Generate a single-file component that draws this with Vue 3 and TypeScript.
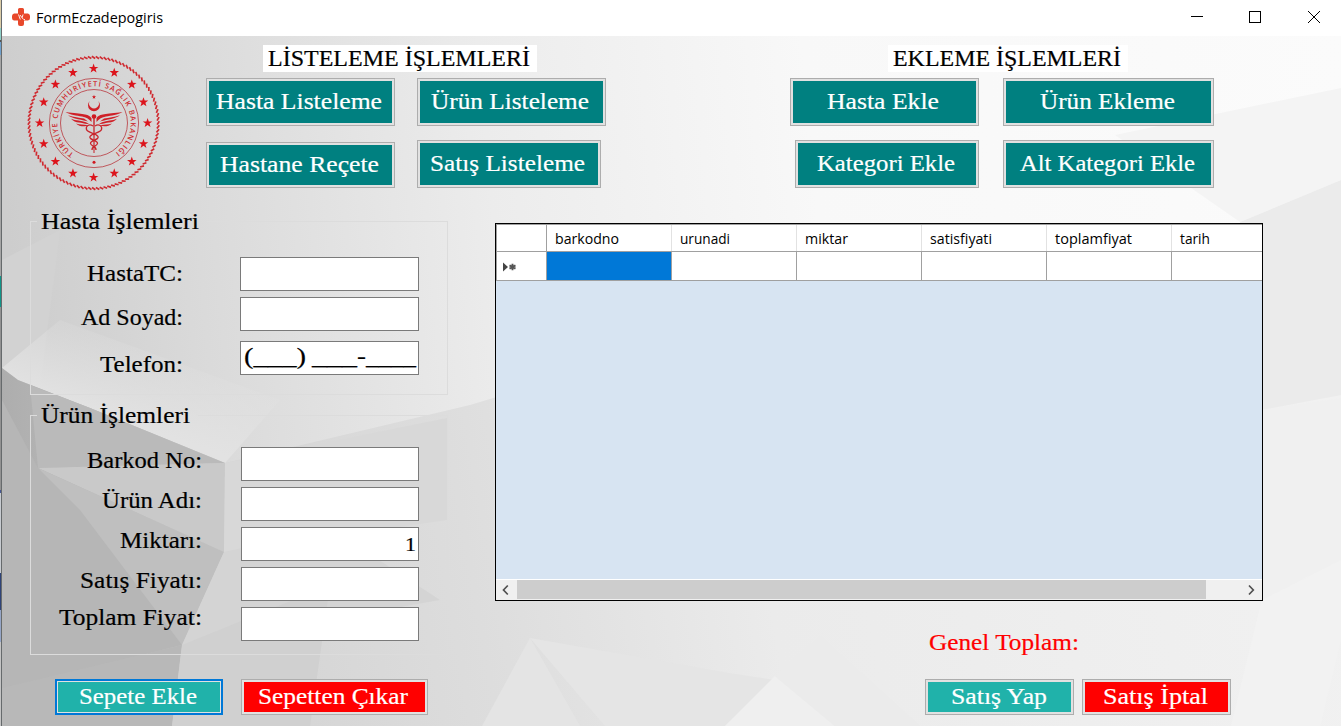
<script setup lang="ts">
import { h, type FunctionalComponent } from 'vue'

interface FitProps { text: string; w: number; kind?: string }

// One line of text set to an exact advance width.
const FitText: FunctionalComponent<FitProps> = (props) =>
  h('svg', { class: ['fit', props.kind ?? 'serif'], width: props.w, height: 30 }, [
    h('text', { x: 0, y: 22, textLength: props.w, lengthAdjust: 'spacingAndGlyphs' }, props.text),
  ])
FitText.props = ['text', 'w', 'kind']

interface Item { text: string; w: number; cls?: string }

const listButtons: Item[] = [
  { text: 'Hasta Listeleme', w: 166, cls: 'w189' },
  { text: 'Ürün Listeleme', w: 158, cls: 'w189' },
  { text: 'Hastane Reçete', w: 159, cls: 'w189 low' },
  { text: 'Satış Listeleme', w: 155, cls: 'w184' },
]
const addButtons: Item[] = [
  { text: 'Hasta Ekle', w: 112, cls: 'w189' },
  { text: 'Ürün Ekleme', w: 135, cls: 'w211' },
  { text: 'Kategori Ekle', w: 138, cls: 'w184' },
  { text: 'Alt Kategori Ekle', w: 175, cls: 'w211' },
]
const patientLabels: Item[] = [
  { text: 'HastaTC:', w: 96 },
  { text: 'Ad Soyad:', w: 102 },
  { text: 'Telefon:', w: 83 },
]
const productLabels: Item[] = [
  { text: 'Barkod No:', w: 115 },
  { text: 'Ürün Adı:', w: 100 },
  { text: 'Miktarı:', w: 82 },
  { text: 'Satış Fiyatı:', w: 122 },
  { text: 'Toplam Fiyat:', w: 143 },
]
const maskParts: Item[] = [
  { text: '(___)', w: 62, cls: 'area' },
  { text: '___', w: 45 },
  { text: '-', w: 9 },
  { text: '____', w: 50 },
]
const columns: Item[] = [
  { text: 'barkodno', w: 64 },
  { text: 'urunadi', w: 50 },
  { text: 'miktar', w: 43 },
  { text: 'satisfiyati', w: 62 },
  { text: 'toplamfiyat', w: 77 },
  { text: 'tarih', w: 30 },
]

const starPoints = (r: number): string =>
  Array.from({ length: 10 }, (_, i) => {
    const a = (Math.PI * i) / 5
    const q = i % 2 ? r * 0.4 : r
    return `${(Math.sin(a) * q).toFixed(2)},${(-Math.cos(a) * q).toFixed(2)}`
  }).join(' ')
const bigStar = starPoints(5)
const smallStar = starPoints(2.2)
const stars = Array.from({ length: 16 }, (_, i) => {
  const a = (Math.PI * i) / 8
  return { x: Math.sin(a) * 54, y: -Math.cos(a) * 54.5 }
})
const ropeTicks = Array.from({ length: 104 }, (_, i) => (i * 360) / 104)
</script>

<template>
  <div class="screen">
    <div class="sliver"></div>
    <div class="window">
      <header class="titlebar">
        <svg class="app-icon" width="18" height="18" viewBox="0 0 18 18">
          <path d="M6 1.500Q6 0 7.500 0H10.500Q12 0 12 1.500V5.500H16Q18 6 18 8V10Q18 12 16 12.500H12V16Q12 18 10 18H8Q6 18 6 16V12.500H2Q0 12 0 10V8Q0 6 2 5.500H6Z" fill="#e8482b" />
          <path d="M6.500 6.500l1.800 5M8 7l3.500 4.500M11 6.500l-.8 3M12 11.500h1" stroke="#fff" stroke-width=".9" fill="none" />
        </svg>
        <FitText text="FormEczadepogiris" :w="127" kind="sans title" />
        <svg class="controls" width="130" height="14" viewBox="0 0 130 14" shape-rendering="crispEdges">
          <path d="M0 5.500h12M58.500.5h11v11h-11z" fill="none" stroke="#000" />
          <path d="M117 0l12 12M129 0l-12 12" fill="none" stroke="#000" shape-rendering="auto" />
        </svg>
      </header>

      <main class="client">
        <svg class="mesh" width="1339" height="690" viewBox="2 36 1339 690" preserveAspectRatio="none">
          <defs>
            <linearGradient id="base" gradientUnits="userSpaceOnUse" x1="0" y1="140" x2="1341" y2="20">
              <stop offset="0" stop-color="#cdcdcd" /><stop offset=".14" stop-color="#dadada" />
              <stop offset=".36" stop-color="#ececec" /><stop offset=".6" stop-color="#f8f8f8" /><stop offset="1" stop-color="#fbfbfb" />
            </linearGradient>
            <linearGradient id="lower" gradientUnits="userSpaceOnUse" x1="200" y1="700" x2="1341" y2="500">
              <stop offset="0" stop-color="#d2d2d2" /><stop offset=".25" stop-color="#dddddd" />
              <stop offset=".5" stop-color="#ebebeb" /><stop offset="1" stop-color="#f1f1f1" />
            </linearGradient>
            <linearGradient id="dark" gradientUnits="userSpaceOnUse" x1="0" y1="0" x2="225" y2="0">
              <stop offset="0" stop-color="#adadad" /><stop offset="1" stop-color="#cbcbcb" />
            </linearGradient>
            <linearGradient id="ridge" gradientUnits="userSpaceOnUse" x1="120" y1="420" x2="150" y2="330">
              <stop offset="0" stop-color="#e2e2e2" /><stop offset="1" stop-color="#e2e2e2" stop-opacity="0" />
            </linearGradient>
          </defs>
          <rect x="2" y="36" width="1339" height="690" fill="url(#base)" />
          <path d="M225 463L470 405L820 300L1341 300V726H2V463Z" fill="url(#lower)" />
          <path d="M1115 135L1341 88V180L1240 222Z" fill="#f4f4f4" />
          <path d="M1240 222L1341 180V395L1262 410Z" fill="#ebebeb" />
          <path d="M1262 410L1341 398V560L1262 600Z" fill="#f0f0f0" />
          <path d="M2 260L60 230L40 388L18 380L2 368Z" fill="#d2d2d2" />
          <path d="M2 368L18 380L90 408L225 463L280 400L60 320Z" fill="url(#ridge)" />
          <path d="M2 368L18 380L90 408L225 463L224 552L182 645L172 726H2Z" fill="url(#dark)" />
          <path d="M30 385L38 468L225 463L90 408Z" fill="#bababa" />
          <path d="M38 468L225 463L224 552Z" fill="#c9c9c9" />
          <path d="M38 468L224 552L182 645L140 595Z" fill="#bfbfbf" />
          <path d="M38 468L80 510L182 645L2 690V400Z" fill="#b6b6b6" />
          <path d="M2 688L182 645L172 726H2Z" fill="#b8b8b8" />
          <path d="M225 463L447 418L447 520L224 552Z" fill="#d8d8d8" />
          <path d="M224 552L330 528L440 600L182 645Z" fill="#d4d4d4" />
          <path d="M182 645L330 585L310 726H172Z" fill="#d0d0d0" />
          <path d="M510 638L560 726H462Z" fill="#e4e4e4" transform="translate(20 0)" />
          <path d="M530 638L735 674L775 680L725 726H605Z" fill="#e5e5e5" />
          <path d="M775 676L725 726H835Z" fill="#efefef" />
          <path d="M775 676L820 636L920 726H835Z" fill="#ebebeb" />
          <path d="M1262 600L1341 560V640L1320 726H1231Z" fill="#f2f2f2" />
        </svg>

        <section class="top">
          <svg class="emblem" width="134" height="136" viewBox="-67 -68 134 136">
            <g transform="translate(-.4 0) scale(.985 1)">
              <path v-for="a in ropeTicks" :key="a" d="M-1.800 -66.700L1.600 -64.500" :transform="`rotate(${a})`" stroke="#cf2a30" stroke-width="1.700" />
            </g>
            <g fill="none" stroke="#b9373d" stroke-width=".8">
              <circle r="44.600" /><circle r="33.500" />
            </g>
            <polygon v-for="(s, i) in stars" :key="i" :points="bigStar" :transform="`translate(${s.x - .4} ${s.y})`" fill="#dc141c" />
            <path id="ring" d="M-20.200 30.600A36.700 36.700 0 1 1 20.200 30.600" fill="none" />
            <text class="ring-text"><textPath href="#ring" textLength="186">TÜRKİYE CUMHURİYETİ SAĞLIK BAKANLIĞI</textPath></text>
            <circle cy="39.300" r="1.500" fill="#d01820" />
            <polygon :points="smallStar" transform="translate(0 -26)" fill="#d01820" />
            <path d="M-4.200 -22A6 6 0 1 0 4.200 -22A4.900 4.900 0 1 1 -4.200 -22Z" fill="#cf1f27" />
            <circle cy="-6.500" r="2.300" fill="#d01820" />
            <g id="wing" fill="#cf2028">
              <path d="M-2.500 -5C-6 -9.500 -11 -8.500 -28.500 -11C-24 -8 -17 -7.500 -12 -6.500C-8 -6 -5 -4 -2.500 -1Z" />
              <path d="M-26 -7.800C-20 -5.600 -15 -5.600 -10 -4.400L-6 -1.500C-10 -3 -22 -4.200 -26 -7.800Z" />
              <path d="M-23 -4.300C-18 -2.300 -13 -2.500 -8 -.8L-5 1C-9 1.500 -12 -.5 -15 -.5C-18 -.8 -21 -2 -23 -4.300Z" />
              <path d="M-18 .4C-14 1.800 -11 1 -6 2.300C-9 4 -15 3.500 -18 .4Z" />
            </g>
            <use href="#wing" transform="scale(-1 1)" />
            <path d="M-.7 -5H.7L.5 30H-.5Z" fill="#c81e26" />
            <path d="M-1 3C-5 .5 -8.500 3 -7.500 6.500C-6.500 10 2 10 4 13.500C5.500 17 -4 17 -3.500 20.500C-3 23.500 2.500 23 2 27M1 3C5 .5 8.500 3 7.500 6.500C6.500 10 -2 10 -4 13.500C-5.500 17 4 17 3.500 20.500C3 23.500 -2.500 23 -2 27" fill="none" stroke="#c9252c" stroke-width="1.300" />
          </svg>

          <div class="menu menu-list">
            <div class="caption"><FitText text="LİSTELEME İŞLEMLERİ" :w="262" /></div>
            <div class="buttons">
              <button v-for="b in listButtons" :key="b.text" :class="['btn', 'teal', b.cls]"><FitText :text="b.text" :w="b.w" /></button>
            </div>
          </div>
          <div class="menu menu-add">
            <div class="caption"><FitText text="EKLEME İŞLEMLERİ" :w="228" /></div>
            <div class="buttons">
              <button v-for="b in addButtons" :key="b.text" :class="['btn', 'teal', b.cls]"><FitText :text="b.text" :w="b.w" /></button>
            </div>
          </div>
        </section>

        <section class="body">
          <div class="left">
            <fieldset class="group patient">
              <legend><FitText text="Hasta İşlemleri" :w="158" /></legend>
              <div class="labels">
                <FitText v-for="l in patientLabels" :key="l.text" :text="l.text" :w="l.w" />
              </div>
              <div class="inputs">
                <div class="box"></div>
                <div class="box"></div>
                <div class="box mask"><FitText v-for="m in maskParts" :key="m.text" :class="m.cls" :text="m.text" :w="m.w" /></div>
              </div>
            </fieldset>
            <fieldset class="group product">
              <legend><FitText text="Ürün İşlemleri" :w="149" /></legend>
              <div class="labels">
                <FitText v-for="l in productLabels" :key="l.text" :text="l.text" :w="l.w" />
              </div>
              <div class="inputs">
                <div class="box"></div>
                <div class="box"></div>
                <div class="box amount"><FitText text="1" :w="11" kind="serif digit" /></div>
                <div class="box"></div>
                <div class="box"></div>
              </div>
            </fieldset>
            <div class="actions">
              <button class="btn sea focused"><FitText text="Sepete Ekle" :w="118" /></button>
              <button class="btn red remove"><FitText text="Sepetten Çıkar" :w="150" /></button>
            </div>
          </div>

          <div class="right">
            <div class="grid">
              <div class="row head">
                <div class="corner"></div>
                <div v-for="c in columns" :key="c.text" class="cell"><FitText :text="c.text" :w="c.w" kind="sans" /></div>
              </div>
              <div class="row entry">
                <div class="corner">
                  <svg width="14" height="10" viewBox="0 0 14 10">
                    <path d="M0 .5L5 5L0 9.500Z" fill="#444" />
                    <path d="M9.500 1.800v6.500M6.500 3.300l6 3.400M12.500 3.300L6.500 6.700" stroke="#555" stroke-width="1.900" />
                  </svg>
                </div>
                <div v-for="(c, i) in columns" :key="c.text" :class="['cell', { selected: i === 0 }]"></div>
              </div>
              <div class="scroll">
                <svg width="20" height="20" viewBox="0 0 20 20"><path d="M11.800 5.500L7.500 10L11.800 14.500" fill="none" stroke="#505050" stroke-width="1.700" /></svg>
                <div class="thumb"></div>
                <svg class="next" width="20" height="20" viewBox="0 0 20 20"><path d="M7 5.500L11.300 10L7 14.500" fill="none" stroke="#505050" stroke-width="1.700" /></svg>
              </div>
            </div>
            <div class="total"><FitText text="Genel Toplam:" :w="150" kind="serif redtext" /></div>
            <div class="sale">
              <button class="btn sea"><FitText text="Satış Yap" :w="96" /></button>
              <button class="btn red"><FitText text="Satış İptal" :w="105" /></button>
            </div>
          </div>
        </section>
      </main>
    </div>
  </div>
</template>

<style>
body { overflow: hidden; }
.fit { display: block; flex: none; overflow: visible; fill: currentColor; }
.fit.serif { font-family: Georgia, "Liberation Serif", "Times New Roman", serif; font-size: 24px; stroke: currentColor; stroke-width: .2px; }
.fit.sans { font-family: "Open Sans", "Noto Sans", sans-serif; font-size: 14.2px; }
.fit.digit { font-size: 18px; }
.fit.redtext { color: #f00; }
</style>

<style scoped>
.screen { display: flex; width: 1341px; height: 726px; overflow: hidden; color: #000; }
.sliver {
  width: 1px; flex: none; border-right: 1px solid #666a6c;
  background: linear-gradient(#dccda8 0 28px, #8fd0c8 28px 40px, #555 40px 42px, #6fa0cc 42px 55px, #a5a5a5 55px 276px, #129488 276px 307px, #929292 307px 490px, #475792 490px 493px, #c7cbd0 493px 573px, #2f4378 573px 610px, #95a5c6 610px 642px, #c3c3c3 642px);
}
.window { display: flex; flex-direction: column; width: 1339px; }
.titlebar { display: flex; flex: none; height: 36px; background: #fff; }
.app-icon { margin: 8px 6px 0 10px; }
.titlebar .title { margin-top: 1px; }
.controls { margin: 11px 20px 0 auto; }
.client { position: relative; width: 1339px; height: 690px; }
.mesh { position: absolute; inset: 0; z-index: 0; }
.top, .body { position: relative; z-index: 1; display: flex; }
.top { height: 171px; align-items: flex-start; }
.emblem { margin: 19px 0 0 25px; flex: none; }
.ring-text { font: 600 7.300px "Open Sans", sans-serif; fill: #cf2a30; }
.menu { display: flex; flex-direction: column; margin-top: 9px; }
.menu-list { width: 400px; margin-left: 45px; }
.menu-add { width: 424px; margin-left: 184px; }
.caption { display: flex; align-items: center; height: 27px; padding: 0 6px 0 5px; background: #fff; align-self: flex-start; }
.menu-list .caption { margin-left: 57px; width: 263px; }
.menu-add .caption { margin-left: 98px; width: 229px; }
.buttons { display: grid; column-gap: 22px; row-gap: 14px; margin-top: 6px; grid-template-columns: 189px 189px; grid-template-rows: 48px 48px; }
.menu-add .buttons { column-gap: 24px; grid-template-columns: 189px 211px; }
.menu-add .w184 { justify-self: end; }
.btn { display: flex; align-items: center; justify-content: center; margin: 0; padding: 0 3px 0 0; box-sizing: border-box; border: 1px solid #adadad; box-shadow: inset 0 0 0 2px #e1e1e1; color: #fff; border-radius: 0; }
.teal { background: #008080; }
.sea { background: #20b2aa; }
.red { background: #f00; }
.w189 { width: 189px; }
.w184 { width: 184px; }
.w211 { width: 211px; }
.low { margin-top: 2px; }
.left { width: 418px; margin-left: 28px; flex: none; }
.group { display: flex; box-sizing: border-box; margin: 0; padding: 0; min-width: 0; width: 418px; border: 1px solid #dcdcdc; }
.group legend { height: 29px; margin-left: 6px; padding: 0 8px 0 4px; }
.patient { height: 188px; }
.product { height: 254px; margin-top: 6px; }
.labels { display: flex; flex-direction: column; align-items: flex-end; }
.patient .labels { width: 152px; padding-top: 23px; gap: 14px; }
.patient .labels > :last-child { margin-top: 3px; }
.product .labels { width: 171px; padding-top: 16px; gap: 10px; }
.product .labels > :last-child { margin-top: -3px; }
.inputs { display: flex; flex-direction: column; gap: 6px; }
.patient .inputs { margin-left: 57px; padding-top: 21px; }
.product .inputs { margin-left: 39px; padding-top: 17px; }
.box { display: flex; box-sizing: border-box; width: 179px; height: 34px; border: 1px solid #7a7a7a; background: #fff; }
.product .box { width: 178px; }
.mask { margin-top: 4px; padding-left: 3px; }
.mask .area { margin-right: 6px; }
.amount { justify-content: flex-end; padding: 1px 2px 0 0; }
.actions { display: flex; margin: 24px 0 0 25px; }
.actions .btn { height: 36px; width: 168px; padding-right: 2px; }
.actions .focused { border: 2px solid #0078d7; box-shadow: inset 0 0 0 1px #e1e1e1; }
.actions .remove { width: 187px; margin-left: 18px; padding-right: 3px; }
.right { width: 768px; margin: 16px 0 0 47px; }
.grid { display: flex; flex-direction: column; box-sizing: border-box; width: 768px; height: 378px; border: 1px solid #000; background: #d7e4f2; }
.row { display: flex; overflow: hidden; box-sizing: border-box; background: #fff; border-bottom: 1px solid #a0a0a0; border-left: 1px solid #a0a0a0; }
.head { height: 28px; border-top: 1px solid #a0a0a0; }
.entry { height: 29px; }
.corner { box-sizing: border-box; flex: none; width: 50px; border-right: 1px solid #a0a0a0; }
.entry .corner { padding: 10px 0 0 6px; }
.entry .corner svg { display: block; }
.cell { box-sizing: border-box; flex: none; width: 125px; border-right: 1px solid #a0a0a0; }
.head .cell { padding: 0 0 0 8px; margin-top: -3px; border-color: #e2e2e2; }
.selected { background: #0078d7; }
.scroll { display: flex; box-sizing: border-box; height: 21px; margin-top: auto; border-top: 1px solid #fff; background: #f0f0f0; }
.thumb { width: 689px; height: 19px; margin-left: 1px; background: #cdcdcd; }
.next { margin-left: auto; }
.total { margin: 27px 0 0 434px; height: 30px; }
.sale { display: flex; gap: 8px; margin: 21px 0 0 430px; }
.sale .btn { width: 149px; height: 36px; padding-right: 2px; }
</style>
